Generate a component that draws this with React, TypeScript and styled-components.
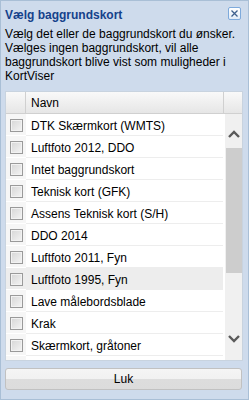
import React from 'react';
import styled, { createGlobalStyle } from 'styled-components';

const GlobalStyle = createGlobalStyle`
    html, body {
        margin: 0;
        padding: 0;
    }
    body {
        font-family: "Liberation Sans", Arial, sans-serif;
    }
`;

const StyledWindow = styled.div`
    box-sizing: border-box;
    width: 249px;
    height: 400px;
    background-color: #cedbec;
    border: 1px solid #a9bfd6;
    padding: 0 6px 0 4px;
    display: flex;
    flex-direction: column;
`;

const StyledHeader = styled.div`
    height: 26px;
    display: flex;
    align-items: center;
    justify-content: space-between;
    .title{
        font-size: 12px;
        font-weight: bold;
        color: #15428b;
        margin-top: 1px;
    }
    .close{
        box-sizing: border-box;
        width: 13px;
        height: 13px;
        border: 1px solid #7eaadc;
        border-radius: 2px;
        background: linear-gradient(#ffffff, #e2ecf8);
        display: flex;
        justify-content: center;
        align-items: center;
        margin-right: 1px;
        margin-top: -1px;
    }
`;

const StyledText = styled.p`
    margin: 0;
    font-size: 12px;
    line-height: 14px;
    color: #000;
    height: 64px;
`;

const StyledGrid = styled.div`
    box-sizing: border-box;
    width: 238px;
    height: 270px;
    border: 1px solid #c8d3df;
    background-color: #fff;
    display: flex;
    flex-direction: column;
    overflow: hidden;
`;

const StyledGridHeader = styled.div`
    height: 21px;
    flex-shrink: 0;
    display: flex;
    background: linear-gradient(#f9f9f9, #e6e6e6);
    border-bottom: 1px solid #d0d0d0;
    font-size: 12px;
    color: #000;
    .check{
        width: 19px;
        border-right: 1px solid #d0d0d0;
    }
    .name{
        flex: 1;
        display: flex;
        align-items: center;
        padding-left: 5px;
        border-right: 1px solid #d0d0d0;
    }
    .scroll{
        width: 18px;
    }
`;

const StyledBody = styled.div`
    flex: 1;
    display: flex;
    overflow: hidden;
`;

const StyledRows = styled.div`
    flex: 1;
    padding-right: 2px;
`;

const StyledRow = styled.div<{ $hover?: boolean }>`
    height: 22px;
    display: flex;
    background-color: ${p => (p.$hover ? '#ededed' : 'transparent')};
    .check{
        width: 20px;
        background-color: ${p => (p.$hover ? '#ededed' : '#f6f6f6')};
        border-bottom: 1px solid #fff;
        box-sizing: border-box;
        display: flex;
        align-items: center;
        justify-content: center;
    }
    .name{
        flex: 1;
        box-sizing: border-box;
        border-bottom: 1px solid #ededed;
        display: flex;
        align-items: center;
        padding-left: 5px;
        padding-top: 2px;
        font-size: 12px;
        color: #000;
        white-space: nowrap;
    }
`;

const StyledCheck = styled.div`
    box-sizing: border-box;
    width: 13px;
    height: 13px;
    margin-top: 2px;
    border: 1px solid #9a9a9a;
    background: linear-gradient(135deg, #d6d6d6, #f4f4f4);
    box-shadow: inset 0 0 0 1px #f2f2f2;
`;

const StyledScrollbar = styled.div`
    width: 17px;
    background-color: #f0f0f0;
    display: flex;
    flex-direction: column;
    .up{
        height: 34px;
        display: flex;
        justify-content: center;
        align-items: flex-end;
        box-sizing: border-box;
        padding-bottom: 10px;
    }
    .track{
        flex: 1;
    }
    .thumb{
        margin-left: 1px;
        width: 16px;
        height: 125px;
        background-color: #cdcdcd;
    }
    .down{
        height: 35px;
        display: flex;
        justify-content: center;
        align-items: flex-start;
        padding-top: 10px;
        box-sizing: border-box;
    }
`;

const StyledButtonBar = styled.div`
    flex: 1;
    display: flex;
    align-items: center;
    padding-bottom: 3px;
`;

const StyledButton = styled.div`
    box-sizing: border-box;
    width: 238px;
    height: 22px;
    border: 1px solid #c1c1c1;
    border-radius: 3px;
    background: linear-gradient(#f5f5f5 0%, #f1f1f1 50%, #dddddd 51%, #dcdcdc 100%);
    display: flex;
    justify-content: center;
    align-items: center;
    font-size: 12px;
    color: #000;
`;

const items = [
    'DTK Skærmkort (WMTS)',
    'Luftfoto 2012, DDO',
    'Intet baggrundskort',
    'Teknisk kort (GFK)',
    'Assens Teknisk kort (S/H)',
    'DDO 2014',
    'Luftfoto 2011, Fyn',
    'Luftfoto 1995, Fyn',
    'Lave målebordsblade',
    'Krak',
    'Skærmkort, gråtoner',
    ''
];

const Chevron = ({ up }: { up: boolean }) => (
    <svg width="12" height="8" viewBox="0 0 12 8">
        <path
            d={up ? 'M1 7 L6 2 L11 7' : 'M1 1 L6 6 L11 1'}
            fill="none"
            stroke="#5a5a5a"
            strokeWidth="2.4"
        />
    </svg>
);

const App = () => {
    return <StyledWindow>
        <GlobalStyle />
        <StyledHeader>
            <span className="title">Vælg baggrundskort</span>
            <div className="close">
                <svg width="9" height="9" viewBox="0 0 9 9">
                    <path d="M1.5 1.5 L7.5 7.5 M7.5 1.5 L1.5 7.5" stroke="#3d5f8d" strokeWidth="1.3" />
                </svg>
            </div>
        </StyledHeader>
        <StyledText>
            Vælg det eller de baggrundskort du ønsker. Vælges ingen baggrundskort, vil alle baggrundskort blive vist som muligheder i KortViser
        </StyledText>
        <StyledGrid>
            <StyledGridHeader>
                <div className="check"></div>
                <div className="name">Navn</div>
                <div className="scroll"></div>
            </StyledGridHeader>
            <StyledBody>
                <StyledRows>
                    {items.map((name, i) => (
                        <StyledRow key={i} $hover={i === 7}>
                            <div className="check"><StyledCheck /></div>
                            <div className="name">{name}</div>
                        </StyledRow>
                    ))}
                </StyledRows>
                <StyledScrollbar>
                    <div className="up"><Chevron up /></div>
                    <div className="track"><div className="thumb"></div></div>
                    <div className="down"><Chevron up={false} /></div>
                </StyledScrollbar>
            </StyledBody>
        </StyledGrid>
        <StyledButtonBar>
            <StyledButton>Luk</StyledButton>
        </StyledButtonBar>
    </StyledWindow>
}

export default App;
